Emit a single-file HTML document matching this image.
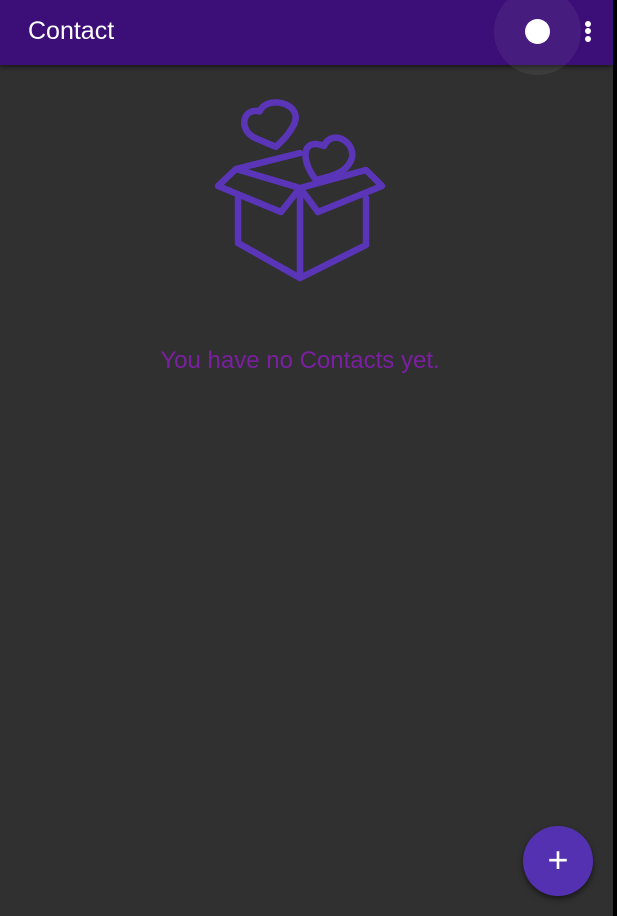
<!DOCTYPE html>
<html><head><style>
body{margin:0;width:617px;height:916px;background:#000;overflow:hidden;font-family:"Liberation Sans",Roboto,sans-serif}
#app{position:absolute;left:0;top:0;width:613px;height:916px;background:#303030}
#bar{position:absolute;left:0;top:0;width:613px;height:65px;background:#3c0e77;box-shadow:0 2px 4px rgba(0,0,0,.5)}
#title{position:absolute;left:28px;top:17px;color:#fff;font-size:25px}
#ripple{position:absolute;left:494px;top:-12px;width:87px;height:87px;border-radius:50%;background:rgba(255,255,255,.06)}
#dot{position:absolute;left:525px;top:19px;width:25px;height:25px;border-radius:50%;background:#fff}
.m{position:absolute;left:585px;width:6px;height:6px;border-radius:50%;background:#fff}
#msg{position:absolute;left:0;width:600px;top:347px;text-align:center;color:#7b1fa2;font-size:24px}
#fab{position:absolute;left:523px;top:826px;width:70px;height:70px;border-radius:50%;background:#5431b0;box-shadow:0 3px 6px rgba(0,0,0,.5);color:#fff;font-size:36px;text-align:center;line-height:68px}
</style></head><body><div id="app">
<div id="bar"><div id="title">Contact</div><div id="ripple"></div><div id="dot"></div>
<div class="m" style="top:21px"></div><div class="m" style="top:28px"></div><div class="m" style="top:36px"></div></div>
<svg style="position:absolute;left:0;top:0" width="613" height="320" fill="none" stroke="#5a35b8" stroke-width="6.5" stroke-linejoin="round" stroke-linecap="round">
<path d="M238 198V243L300 278L366 245V198M300 188V278"/>
<path d="M300 188L236 169L218 186L281 212Z"/>
<path d="M300 188L366 170L382 186L318 212Z"/>
<path d="M236 169L300 153"/>
<path d="M258 140C240 135 240 112 258 113C262 95 300 97 294 120C291 130 286 137 280 145Z" transform="rotate(10 268 122)"/>
<path d="M316 180C300 160 302 137 324 146C333 126 362 146 349 164C344 172 334 176 316 180Z"/>
</svg>
<div id="msg">You have no Contacts yet.</div>
<div id="fab">+</div>
</div></body></html>
